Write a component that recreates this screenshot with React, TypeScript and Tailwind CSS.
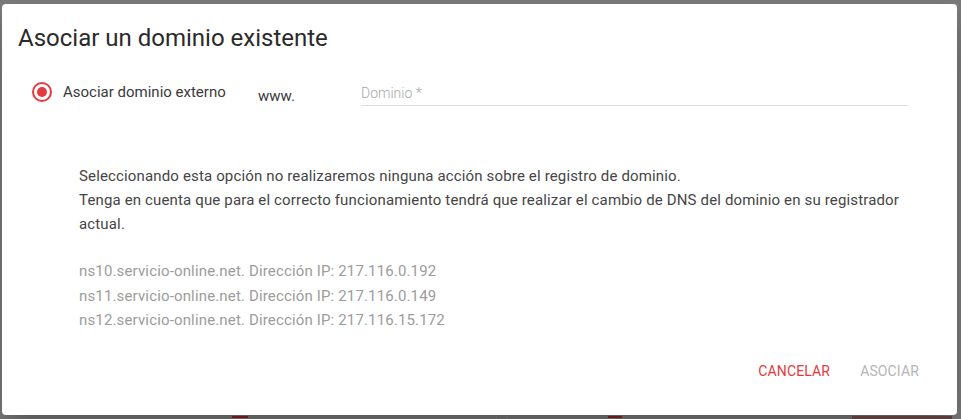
import { useState } from "react";

export default function App() {
  const [domain, setDomain] = useState("");

  const servers = [
    { host: "ns10.servicio-online.net.", ip: "217.116.0.192" },
    { host: "ns11.servicio-online.net.", ip: "217.116.0.149" },
    { host: "ns12.servicio-online.net.", ip: "217.116.15.172" },
  ];

  return (
    <div
      className="w-[961px] h-[419px] bg-[#7a7a7a] pt-[4px] pl-[2px] overflow-hidden"
      style={{ fontFamily: "Roboto, 'Liberation Sans', sans-serif" }}
    >
      {/* Dialog */}
      <div className="w-[955px] h-[411px] bg-white rounded-[4px] shadow-[0_11px_15px_-7px_rgba(0,0,0,0.2),0_24px_38px_3px_rgba(0,0,0,0.14)] pt-[18px] flex flex-col">
        <h2 className="pl-[16px] text-[24px] leading-[32px] text-[#2a2a2a] font-normal">
          Asociar un dominio existente
        </h2>

        {/* Option row */}
        <div className="mt-[18px] h-[40px] flex items-center pl-[30px]">
          <span className="w-[20px] h-[20px] rounded-full border-2 border-[#e53940] flex items-center justify-center shrink-0">
            <span className="w-[10px] h-[10px] rounded-full bg-[#e53940]" />
          </span>
          <span className="ml-[11px] w-[195px] text-[15px] text-[#3a3a3a]">
            Asociar dominio externo
          </span>
          <span className="w-[103px] mt-[8px] text-[15px] text-[#3a3a3a]">
            www.
          </span>
          <div className="w-[547px] pt-[3px]">
            <input
              value={domain}
              onChange={(e) => setDomain(e.target.value)}
              placeholder="Dominio *"
              className="w-full h-[25px] border-b border-[#dedede] text-[14px] font-light text-[#333] placeholder:text-[#a8a8a8] outline-none bg-transparent"
            />
          </div>
        </div>

        {/* Explanation */}
        <p className="mt-[52px] ml-[77px] w-[840px] text-[15px] leading-[24px] tracking-[0.15px] text-[#454545]">
          Seleccionando esta opción no realizaremos ninguna acción sobre el registro de dominio.
          <br />
          Tenga en cuenta que para el correcto funcionamiento tendrá que realizar el cambio de DNS del dominio en su registrador actual.
        </p>

        <div className="mt-[23px] ml-[77px] text-[15px] leading-[24.5px] tracking-[0.15px] text-[#9c9c9c]">
          {servers.map((s) => (
            <div key={s.host}>
              {s.host} Dirección IP: {s.ip}
            </div>
          ))}
        </div>

        {/* Actions */}
        <div className="mt-[21px] flex justify-end pr-[23px]">
          <button className="h-[36px] px-[15px] text-[14px] tracking-[0.01em] uppercase text-[#e53940]">
            Cancelar
          </button>
          <button
            disabled
            className="h-[36px] px-[15px] text-[14px] tracking-[0.01em] uppercase text-[#b5b5b5]"
          >
            Asociar
          </button>
        </div>
      </div>

      {/* Page behind the overlay, barely visible */}
      <div className="mt-[1px] h-[4px] flex items-start">
        <div className="ml-[230px] w-[16px] h-[2px] bg-[#6b1a1a]" />
        <div className="ml-[248px] w-[1px] h-[4px] bg-[#666]" />
        <div className="ml-[10px] w-[1px] h-[4px] bg-[#666]" />
        <div className="ml-[100px] w-[14px] h-[2px] bg-[#6b1a1a]" />
        <div className="ml-[230px] w-[100px] h-[4px] bg-[#5a3a3a]" />
      </div>
    </div>
  );
}
